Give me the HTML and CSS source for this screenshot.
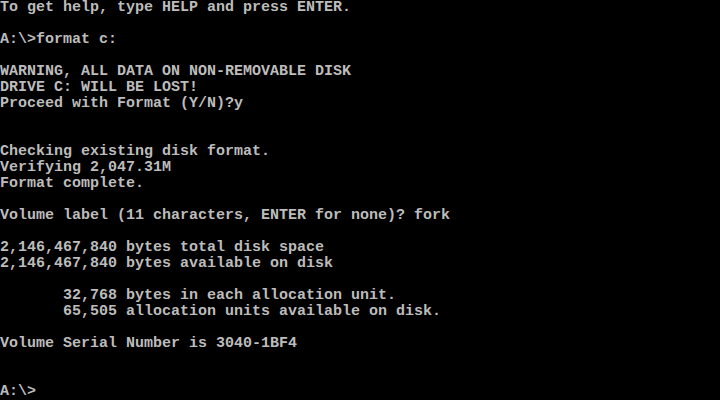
FILE: index.html
```html
<!DOCTYPE html>
<html>
<head>
    <link rel="stylesheet" href="styles.css">
</head>
<body>
    <div class="console">
<pre class="screen">To get help, type HELP and press ENTER.

A:\>format c:

WARNING, ALL DATA ON NON-REMOVABLE DISK
DRIVE C: WILL BE LOST!
Proceed with Format (Y/N)?y


Checking existing disk format.
Verifying 2,047.31M
Format complete.

Volume label (11 characters, ENTER for none)? fork

2,146,467,840 bytes total disk space
2,146,467,840 bytes available on disk

       32,768 bytes in each allocation unit.
       65,505 allocation units available on disk.

Volume Serial Number is 3040-1BF4


A:\&gt;</pre>
    </div>
</body>
</html>
```

FILE: styles.css
```css
html, body {
    margin: 0;
    padding: 0;
    background: #000;
}
.console {
    width: 720px;
    height: 400px;
    overflow: hidden;
    background: #000;
}
.screen {
    margin: 0;
    font-family: "Liberation Mono", "DejaVu Sans Mono", monospace;
    font-size: 15px;
    font-weight: bold;
    line-height: 16px;
    color: #bcbcbc;
    white-space: pre;
}
```
